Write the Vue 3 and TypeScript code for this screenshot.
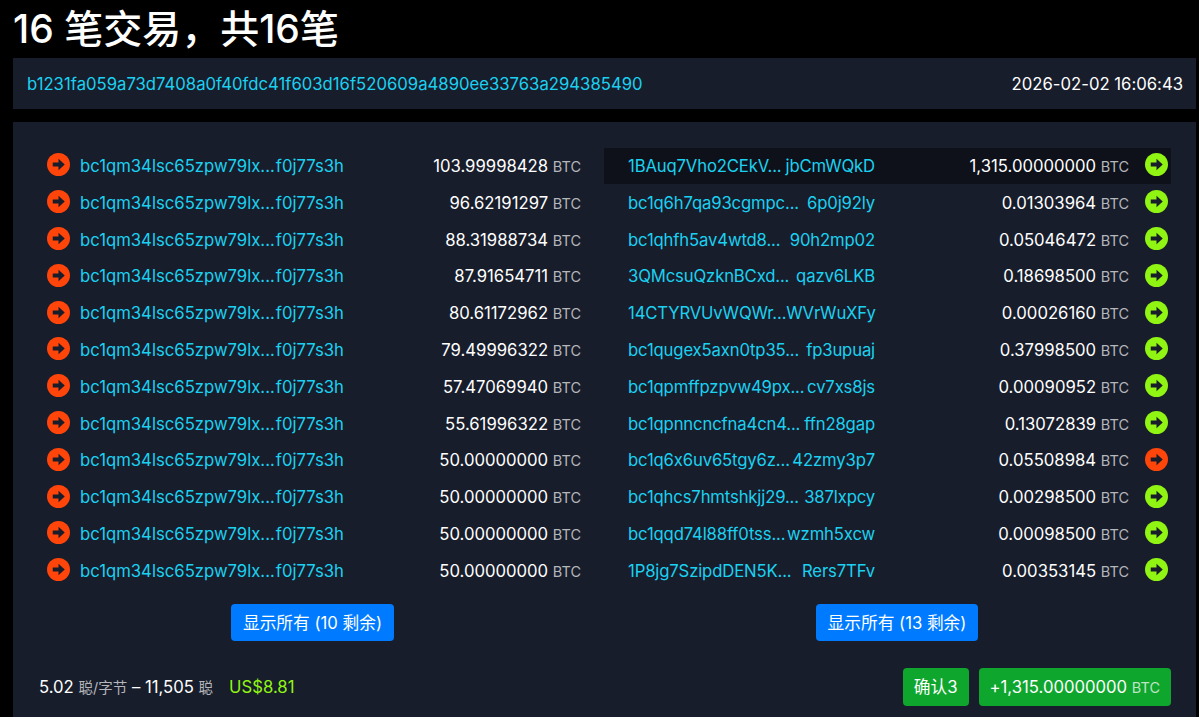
<script setup lang="ts">
interface Output {
  start: string
  end: string
  amount: string
  spent?: boolean
  highlight?: boolean
}

const inputs: string[] = [
  '103.99998428',
  '96.62191297',
  '88.31988734',
  '87.91654711',
  '80.61172962',
  '79.49996322',
  '57.47069940',
  '55.61996322',
  '50.00000000',
  '50.00000000',
  '50.00000000',
  '50.00000000'
]

const outputs: Output[] = [
  { start: '1BAuq7Vho2CEkV...', end: 'jbCmWQkD', amount: '1,315.00000000', highlight: true },
  { start: 'bc1q6h7qa93cgmpc...', end: '6p0j92ly', amount: '0.01303964' },
  { start: 'bc1qhfh5av4wtd8...', end: '90h2mp02', amount: '0.05046472' },
  { start: '3QMcsuQzknBCxd...', end: 'qazv6LKB', amount: '0.18698500' },
  { start: '14CTYRVUvWQWr...', end: 'WVrWuXFy', amount: '0.00026160' },
  { start: 'bc1qugex5axn0tp35...', end: 'fp3upuaj', amount: '0.37998500' },
  { start: 'bc1qpmffpzpvw49px...', end: 'cv7xs8js', amount: '0.00090952' },
  { start: 'bc1qpnncncfna4cn4...', end: 'ffn28gap', amount: '0.13072839' },
  { start: 'bc1q6x6uv65tgy6z...', end: '42zmy3p7', amount: '0.05508984', spent: true },
  { start: 'bc1qhcs7hmtshkjj29...', end: '387lxpcy', amount: '0.00298500' },
  { start: 'bc1qqd74l88ff0tss...', end: 'wzmh5xcw', amount: '0.00098500' },
  { start: '1P8jg7SzipdDEN5K...', end: 'Rers7TFv', amount: '0.00353145' }
]
</script>

<template>
  <div class="page">
    <h1 class="title">16 笔交易，共16笔</h1>

    <div class="box head">
      <a class="link">b1231fa059a73d7408a0f40fdc41f603d16f520609a4890ee33763a294385490</a>
      <span class="time">2026-02-02 16:06:43</span>
    </div>

    <div class="box body">
      <div class="cols">
        <div class="col">
          <div v-for="(amount, i) in inputs" :key="i" class="row in-row">
            <svg class="arrow red" viewBox="0 0 24 24">
              <circle cx="12" cy="12" r="12" fill="currentColor" />
              <path d="M6 10h6V6l6.500 6-6.500 6v-4H6z" fill="#181d2b" />
            </svg>
            <a class="link addr in-addr"><span>bc1qm34lsc65zpw79lx...</span><span>f0j77s3h</span></a>
            <span class="amount in-amount">{{ amount }} <span class="unit">BTC</span></span>
          </div>
          <div class="more"><button class="btn">显示所有 (10 剩余)</button></div>
        </div>

        <div class="col">
          <div v-for="o in outputs" :key="o.end" class="row out-row" :class="{ hl: o.highlight }">
            <a class="link addr out-addr"><span>{{ o.start }}</span><span>{{ o.end }}</span></a>
            <span class="amount out-amount">{{ o.amount }} <span class="unit">BTC</span></span>
            <svg class="arrow" :class="o.spent ? 'red' : 'green'" viewBox="0 0 24 24">
              <circle cx="12" cy="12" r="12" fill="currentColor" />
              <path d="M6 10h6V6l6.500 6-6.500 6v-4H6z" fill="#181d2b" />
            </svg>
          </div>
          <div class="more"><button class="btn">显示所有 (13 剩余)</button></div>
        </div>
      </div>

      <div class="foot">
        <div class="fee">
          5.02 <span class="unit">聪/字节</span> – 11,505 <span class="unit">聪</span>
          <span class="usd">US$8.81</span>
        </div>
        <div class="badges">
          <span class="badge">确认3</span>
          <span class="badge">+1,315.00000000 <span class="unit">BTC</span></span>
        </div>
      </div>
    </div>
  </div>
</template>

<style scoped>
.page {
  height: 717px;
  overflow: hidden;
  padding: 0 3px 0 13px;
  box-sizing: border-box;
  background: #000;
  color: #fff;
  font-family: Inter, "Noto Sans CJK SC", sans-serif;
  font-size: 16.7px;
  font-feature-settings: "calt" 0;
}

.title {
  margin: 0;
  height: 58px;
  line-height: 58px;
  font-size: 39px;
  font-weight: 500;
}

.box {
  background: #181d2b;
}

.head {
  height: 51px;
  margin-bottom: 13px;
  padding: 0 13px 0 14px;
  display: flex;
  align-items: center;
  justify-content: space-between;
}

.link {
  color: #1bd1f1;
}

.body {
  height: 595px;
  padding: 25.6px 25px 0 14px;
  box-sizing: border-box;
}

.cols {
  display: grid;
  grid-template-columns: 563px 567px;
  gap: 14px;
}

.row {
  height: 36.8px;
  display: flex;
  align-items: center;
}

.in-row {
  padding-left: 20px;
}

.hl {
  background: #0e1119;
}

.arrow {
  width: 23px;
  height: 23px;
  flex: none;
  margin-top: -2px;
}

.red {
  color: #ff4509;
}

.green {
  color: #90f513;
}

.addr {
  display: flex;
  justify-content: space-between;
  white-space: nowrap;
  flex: none;
}

.in-addr {
  width: 264px;
  margin-left: 10px;
}

.out-addr {
  width: 247px;
  margin-left: 24px;
  letter-spacing: -0.15px;
}

.amount {
  margin-left: auto;
  white-space: nowrap;
}

.in-amount {
  margin-right: 9px;
}

.out-amount {
  margin-right: 16px;
}

.out-row .arrow {
  margin-right: 3px;
}

.unit {
  color: #b4b6bb;
  font-size: 14.5px;
}

.more {
  display: flex;
  justify-content: center;
  margin-top: 14.4px;
}

.col:first-child .more {
  padding-left: 8px;
}

.col:last-child .more {
  padding-left: 19px;
}

.btn {
  height: 37px;
  padding: 0 12px;
  border: none;
  border-radius: 4px;
  background: #007bff;
  color: #fff;
  font: inherit;
  font-feature-settings: inherit;
}

.foot {
  display: flex;
  align-items: center;
  justify-content: space-between;
  margin-top: 27px;
  padding-left: 12px;
}

.fee .unit {
  font-size: 14.5px;
}

.usd {
  color: #90f513;
  margin-left: 16px;
}

.badges {
  display: flex;
  gap: 10px;
}

.badge {
  height: 38px;
  line-height: 38px;
  padding: 0 11px;
  border-radius: 4px;
  background: #0fa62e;
}

.badge .unit {
  color: rgba(255, 255, 255, 0.72);
}
</style>

<style>
html, body {
  background: #000;
}
</style>
